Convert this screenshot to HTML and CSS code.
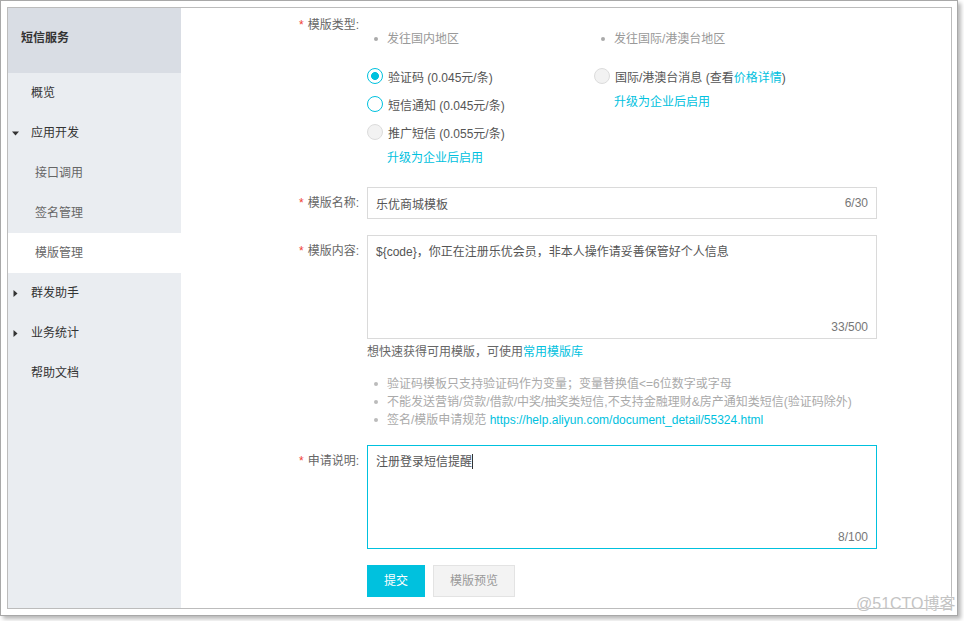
FILE: index.html
```html
<!DOCTYPE html>
<html lang="zh-CN">
<head>
<meta charset="utf-8">
<title>短信服务 - 模版管理</title>
<link rel="stylesheet" href="styles.css">
</head>
<body>
<div class="frame">
  <div class="panel">
    <aside class="sidebar">
      <div class="side-head">短信服务</div>
      <nav class="nav">
        <div class="nav-item">概览</div>
        <div class="nav-item has-caret"><svg class="caret" width="7" height="7" viewBox="0 0 7 7"><path d="M0 1.5H7L3.5 5.5Z"/></svg>应用开发</div>
        <div class="nav-sub">接口调用</div>
        <div class="nav-sub">签名管理</div>
        <div class="nav-sub active">模版管理</div>
        <div class="nav-item has-caret"><svg class="caret" width="7" height="7" viewBox="0 0 7 7"><path d="M1.5 0V7L5.5 3.5Z"/></svg>群发助手</div>
        <div class="nav-item has-caret"><svg class="caret" width="7" height="7" viewBox="0 0 7 7"><path d="M1.5 0V7L5.5 3.5Z"/></svg>业务统计</div>
        <div class="nav-item">帮助文档</div>
      </nav>
    </aside>
    <main class="main">
      <div class="row row-type">
        <div class="lbl"><span class="req">*</span>模版类型:</div>
        <div class="ctl type-cols">
          <div class="type-col left">
            <div class="type-head"><span class="dot"></span>发往国内地区</div>
            <div class="radio first"><span class="rb checked"></span>验证码 (0.045元/条)</div>
            <div class="radio"><span class="rb"></span>短信通知 (0.045元/条)</div>
            <div class="radio"><span class="rb disabled"></span>推广短信 (0.055元/条)</div>
            <div class="up-link link">升级为企业后启用</div>
          </div>
          <div class="type-col right">
            <div class="type-head"><span class="dot"></span>发往国际/港澳台地区</div>
            <div class="radio first"><span class="rb disabled"></span><span>国际/港澳台消息 (查看<span class="link">价格详情</span>)</span></div>
            <div class="up-link link">升级为企业后启用</div>
          </div>
        </div>
      </div>

      <div class="row row-name">
        <div class="lbl"><span class="req">*</span>模版名称:</div>
        <div class="ctl">
          <div class="input"><span>乐优商城模板</span><span class="count">6/30</span></div>
        </div>
      </div>

      <div class="row row-content">
        <div class="lbl"><span class="req">*</span>模版内容:</div>
        <div class="ctl">
          <div class="textarea"><span>${code}，你正在注册乐优会员，非本人操作请妥善保管好个人信息</span><span class="count">33/500</span></div>
          <div class="helper">想快速获得可用模版，可使用<span class="link">常用模版库</span></div>
          <ul class="notes">
            <li><span class="dot"></span>验证码模板只支持验证码作为变量；变量替换值&lt;=6位数字或字母</li>
            <li><span class="dot"></span>不能发送营销/贷款/借款/中奖/抽奖类短信,不支持金融理财&amp;房产通知类短信(验证码除外)</li>
            <li><span class="dot"></span>签名/模版申请规范 <span class="link">https://help.aliyun.com/document_detail/55324.html</span></li>
          </ul>
        </div>
      </div>

      <div class="row row-desc">
        <div class="lbl"><span class="req">*</span>申请说明:</div>
        <div class="ctl">
          <div class="textarea focus"><span>注册登录短信提醒<span class="caret-line"></span></span><span class="count">8/100</span></div>
        </div>
      </div>

      <div class="row row-btns">
        <div class="lbl"></div>
        <div class="ctl btns">
          <div class="btn primary">提交</div>
          <div class="btn ghost">模版预览</div>
        </div>
      </div>
    </main>
  </div>
</div>
<div class="watermark">@51CTO博客</div>
</body>
</html>
```

FILE: styles.css
```css
* { box-sizing: border-box; }

html, body {
  margin: 0;
  padding: 0;
  background: #fff;
}

body {
  font-family: "Liberation Sans", "Noto Sans CJK SC", Arial, sans-serif;
  font-size: 12px;
  color: #555;
  width: 964px;
  height: 621px;
  overflow: hidden;
  position: relative;
}

.frame {
  width: 958px;
  height: 616px;
  border: 1px solid #a8a8a8;
  padding: 6px 5px 6px 6px;
  background: #fff;
  box-shadow: 3px 3px 4px rgba(0, 0, 0, 0.28);
}

.panel {
  height: 602px;
  border: 1px solid #bcbcbc;
  display: flex;
  overflow: hidden;
}

/* Sidebar */
.sidebar {
  width: 173px;
  flex: none;
  background: #eaedf1;
}

.side-head {
  height: 65px;
  background: #d9dde4;
  padding: 21px 0 0 13px;
  line-height: 18px;
  font-weight: bold;
  color: #333;
}

.nav-item,
.nav-sub {
  height: 40px;
  line-height: 40px;
  display: flex;
  align-items: center;
}

.nav-item {
  padding-left: 23px;
  color: #333;
}

.nav-item.has-caret {
  padding-left: 4px;
}

.caret {
  fill: #333;
  margin-right: 12px;
  flex: none;
}

.nav-sub {
  padding-left: 27px;
  color: #666;
}

.nav-sub.active {
  background: #fff;
}

/* Main */
.main {
  flex: 1;
  padding-top: 1px;
  background: #fff;
}

.row {
  display: grid;
  grid-template-columns: 178px 510px;
  column-gap: 8px;
  align-items: start;
}

.lbl {
  text-align: right;
  line-height: 32px;
  color: #666;
}

.req {
  color: #f04134;
  margin-right: 4px;
}

.link {
  color: #00c1de;
}

.type-cols {
  display: flex;
  padding-top: 21px;
}

.type-col.left {
  width: 227px;
}

.type-head {
  line-height: 18px;
  color: #999;
  padding-left: 7px;
}

.dot {
  display: inline-block;
  width: 4px;
  height: 4px;
  border-radius: 50%;
  background: #aaa;
  margin-right: 9px;
  vertical-align: 2px;
}

.radio {
  height: 28px;
  display: flex;
  align-items: center;
  color: #555;
}

.radio.first {
  margin-top: 14px;
}

.rb {
  width: 16px;
  height: 16px;
  border-radius: 50%;
  border: 1px solid #00c1de;
  background: #fff;
  margin-right: 5px;
  flex: none;
}

.rb.checked {
  background: radial-gradient(circle, #00c1de 0 3.6px, #fff 4.3px);
}

.rb.disabled {
  border-color: #dcdcdc;
  background: #f2f2f2;
}

.up-link {
  margin-top: 3px;
  line-height: 18px;
  padding-left: 20px;
}

.row-name {
  margin-top: 20px;
}

.input {
  height: 32px;
  border: 1px solid #dadada;
  display: flex;
  align-items: center;
  justify-content: space-between;
  padding: 0 8px;
  color: #555;
}

.count {
  color: #777;
}

.row-content {
  margin-top: 16px;
}

.textarea {
  height: 104px;
  border: 1px solid #dadada;
  padding: 7px 8px 2px 8px;
  line-height: 18px;
  display: flex;
  flex-direction: column;
  justify-content: space-between;
  color: #555;
}

.textarea .count {
  align-self: flex-end;
}

.textarea.focus {
  border-color: #00c1de;
}

.caret-line {
  display: inline-block;
  width: 1px;
  height: 15px;
  background: #333;
  vertical-align: -3px;
}

.helper {
  margin-top: 4px;
  line-height: 18px;
  color: #666;
}

.notes {
  list-style: none;
  margin: 14px 0 0 0;
  padding: 0 0 0 7px;
  color: #aaa;
}

.notes li {
  line-height: 18px;
}

.notes .dot {
  background: #bbb;
}

.row-desc {
  margin-top: 16px;
}

.row-btns {
  margin-top: 16px;
}

.btns {
  display: flex;
  gap: 8px;
}

.btn {
  height: 32px;
  line-height: 30px;
  text-align: center;
  border: 1px solid transparent;
}

.btn.primary {
  width: 58px;
  background: #00c1de;
  border-color: #00c1de;
  color: #fff;
}

.btn.ghost {
  width: 82px;
  background: #f3f3f3;
  border-color: #e3e3e3;
  color: #999;
}

.watermark {
  position: absolute;
  left: 856px;
  top: 594px;
  font-size: 16px;
  line-height: 20px;
  color: #c4c4c4;
  text-shadow: 0 0 2px #fff;
}
```
